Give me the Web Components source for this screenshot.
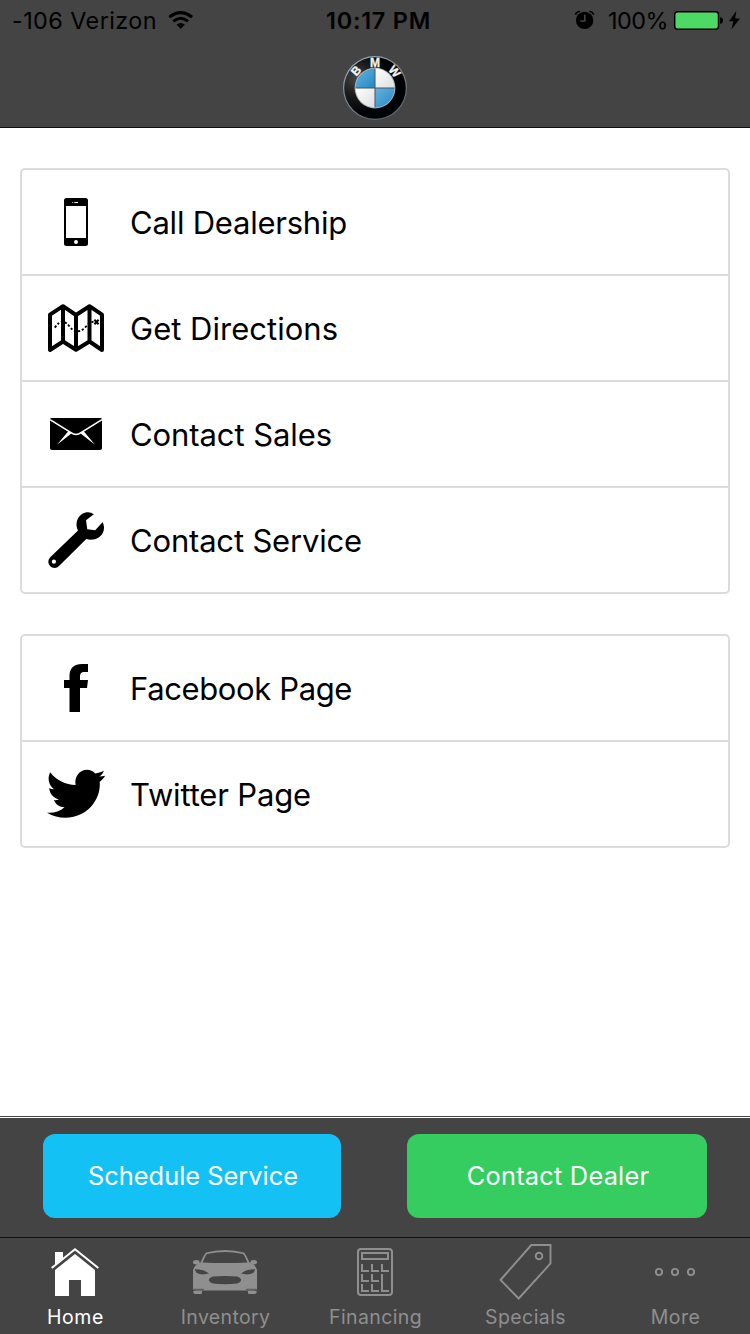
<!DOCTYPE html>
<html lang="en">
<head>
<meta charset="utf-8">
<title>Dealership</title>
<style>
html,body{margin:0;padding:0;background:#fff}
body{font-family:Inter,Roboto,"Liberation Sans",sans-serif;color:#000}
</style>
</head>
<body>
<dealer-app></dealer-app>
<script>
function define(name, html, ready) {
  const template = document.createElement('template');
  template.innerHTML = html;
  customElements.define(name, class extends HTMLElement {
    connectedCallback() {
      if (this.shadowRoot) return;
      this.attachShadow({mode: 'open'}).append(template.content.cloneNode(true));
      if (ready) ready(this, this.shadowRoot);
    }
  });
}

/* One line of text whose tracking is set so that it fills the given width. */
define('fit-label', `
<style>:host{display:inline-block;white-space:nowrap;flex:none}span{display:inline-block}</style>
<span><slot></slot></span>`, (el, root) => {
  const span = root.querySelector('span');
  const target = Number(el.getAttribute('width'));
  const gap = (target - span.getBoundingClientRect().width) / el.textContent.length;
  span.style.letterSpacing = gap.toFixed(3) + 'px';
});

define('status-bar', `
<style>
:host{display:grid;grid-template-columns:1fr auto 1fr;grid-template-rows:40px;align-items:center;height:40px;font-size:23.4px;line-height:40px}
.left,.right{display:flex;align-items:center;height:40px}
.left{padding-left:12px}
.right{justify-content:flex-end;padding-right:9px}
.time{font-weight:600;margin-left:7px}
svg{display:block;flex:none}
fit-label{margin-top:1px}
</style>
<div class="left"><fit-label width="145">-106 Verizon</fit-label>
<svg style="margin-left:11px" width="26" height="40" viewBox="168 0 26 40"><g fill="none" stroke="#000" stroke-width="3"><path d="M169.3 17.2Q180.7 8 192.1 17.2"/><path d="M173.3 21.4Q180.7 15.2 188.1 21.4"/></g><path d="M176.6 24.8Q180.7 21.2 184.8 24.8L180.7 29Z"/></svg></div>
<div class="time"><fit-label width="105">10:17 PM</fit-label></div>
<div class="right">
<svg width="22" height="40" viewBox="574 0 22 40"><circle cx="584.6" cy="20.4" r="8.7"/><path d="M575.4 14.6Q576.6 11.8 579.8 11.3M593.8 14.6Q592.6 11.8 589.4 11.3" fill="none" stroke="#000" stroke-width="1.5"/><path d="M584.8 14.8V21H580.2" fill="none" stroke="#444" stroke-width="1.6"/></svg>
<fit-label width="60" style="margin-left:12px">100%</fit-label>
<svg style="margin-left:5px" width="68" height="40" viewBox="673 0 68 40"><rect x="674.7" y="11.7" width="43.8" height="17.6" rx="3" fill="#4cd964" stroke="#000" stroke-width="1.5"/><path d="M720 17.3Q723 17.6 723 20.5T720 23.8Z"/><path d="M736.3 11L729 21.3H733.4L731.4 29.5L740 18.4H735.2Z"/></svg>
</div>`);

define('brand-logo', `
<style>:host{display:block;width:66px;height:66px}svg{display:block}text{font:bold 12px "Liberation Sans",Arial,sans-serif;fill:#f4f4f4;stroke:#f4f4f4;stroke-width:.3px;text-anchor:middle}</style>
<svg width="66" height="66" viewBox="-33 -33 66 66">
<defs>
<linearGradient id="rim" x1="0" y1="0" x2=".6" y2="1"><stop offset="0" stop-color="#a9bac6"/><stop offset=".5" stop-color="#7d8a94"/><stop offset="1" stop-color="#59666d"/></linearGradient>
<radialGradient id="ring" cx=".2" cy=".35" r=".55"><stop offset="0" stop-color="#484848"/><stop offset=".5" stop-color="#1b1b1b"/><stop offset="1" stop-color="#000305"/></radialGradient>
<linearGradient id="blue" x1="0" y1="0" x2="1" y2="1"><stop offset="0" stop-color="#68b2df"/><stop offset="1" stop-color="#2189c4"/></linearGradient>
<linearGradient id="white" x1="0" y1="0" x2="1" y2="1"><stop offset="0" stop-color="#fff"/><stop offset="1" stop-color="#dcdedf"/></linearGradient>
</defs>
<circle r="32" fill="url(#rim)"/><circle r="30.8" fill="url(#ring)"/>
<circle r="20.4" fill="#a9b4bb"/>
<path d="M0 0V-19.4A19.4 19.4 0 0 0-19.4 0Z" fill="url(#blue)"/><path d="M0 0V19.4A19.4 19.4 0 0 0 19.4 0Z" fill="url(#blue)"/>
<path d="M0 0V-19.4A19.4 19.4 0 0 1 19.4 0Z" fill="url(#white)"/><path d="M0 0V19.4A19.4 19.4 0 0 1-19.4 0Z" fill="url(#white)"/>
<path d="M-19.4 0H19.4M0-19.4V19.4" stroke="#46545d" stroke-width="1"/>
<text transform="rotate(-48)" y="-21.5">B</text><text y="-21.5">M</text><text transform="rotate(50)" y="-21.5">W</text>
</svg>`);

define('app-header', `
<style>:host{display:flex;flex-direction:column;height:127px;background:#444;border-bottom:1px solid #111}
brand-logo{align-self:center;margin-top:15px}</style>
<status-bar></status-bar><brand-logo></brand-logo>`);

define('link-card', `
<style>:host{display:flex;flex-direction:column;gap:2px;background:#dcdcdc;border:2px solid #dcdcdc;border-radius:5px;overflow:hidden}</style>
<slot></slot>`);

const rowIcons = {
phone: ['46 192 60 60', '<path fill-rule="evenodd" d="M66.5 198H85.5Q88 198 88 200.5V243.5Q88 246 85.5 246H66.5Q64 246 64 243.5V200.5Q64 198 66.5 198ZM66 206V238H86V206Z"/><circle cx="76" cy="242" r="2" fill="#fff"/><path d="M74.3 202.5H78" stroke="#fff"/><circle cx="72.7" cy="202.5" r=".5" fill="#fff"/>'],
map: ['46 298 60 60', '<g fill="none" stroke="#000"><path stroke-width="4" stroke-linejoin="round" d="M50 314.7L63 306.2L76 315L89.5 306.2L102 314.7V350L89.5 341.5L76 349.7L63 341.5L50 350ZM63 306V342M76 315V350M89.5 306V342"/><path stroke-width="1.9" stroke-dasharray="2.200 1.900" d="M54.8 327.6Q59 321.5 63 321.8Q66.500 322.3 69.500 326.500Q73 331.200 77 331.400Q82.500 331 86 326.500Q90 321.500 94 321.800"/><path stroke-width="2" d="M94.400 319.800L98.600 324.200M98.600 319.800L94.400 324.200"/></g>'],
mail: ['46 404 60 60', '<path d="M51 418H101L102 419V448Q102 450 100 450H52Q50 450 50 448V419Z"/><path d="M50 419.6L71 432.6Q76 436.500 81 432.600L102 419.600" fill="none" stroke="#fff" stroke-width="1.6"/><path fill="#fff" d="M68.500 431L57 444.700L72 433ZM83.500 431L95 444.700L80 433Z"/>'],
wrench: ['46 510 60 60', '<path fill-rule="evenodd" d="M93.800 514.300L86 520.200L87.300 529.300L95.200 530.300L102.500 522.300C104.300 524.800 104.400 529 103.200 532C100.700 538.200 93.500 541 86.300 539L59 566A6.100 6.100 0 1 1 50 557.500L78 530.500C74.800 524 76.800 517.500 82 514C86 511.500 90.500 511.500 93.800 514.300ZM53.900 559.600A2.100 2.100 0 1 0 53.900 563.800A2.100 2.100 0 1 0 53.900 559.600Z"/>'],
facebook: ['46 658 60 60', '<path d="M88 664H82C74 664 69.500 668 69.500 676V680H64V688H69.500V712H80V688H87L88 680H80V676.500C80 673.500 81 672 84 672H88Z"/>'],
twitter: ['46 764 60 60', '<path d="M50.200 772.300C56.500 780.500 65.500 784.600 75.600 785C74 776.500 79.800 769.800 87 769.800C90.200 769.800 92.800 771.100 95.200 773.500C98 773.200 101 772.200 103.900 770.800C103 773.400 101.500 775.200 99.300 776.500C101.200 776.500 103.200 776.200 105.200 775.700C103.700 778.200 102 780 99.700 781.700C100.300 789.700 98.300 796.800 93.500 803.500C84 817.200 63.500 822.500 47 812.700C53.500 813.300 59.700 811.500 64.500 807.300C59.500 807.300 55.500 804.500 54 800.100C55.700 800.400 57.300 800.200 58.800 799.500C53.500 798 49.500 793.500 49.300 788C50.800 788.900 52.400 789.300 54 789.200C48.500 784.700 47.200 778.300 50.200 772.300Z"/>']
};
define('link-row', `
<style>:host{display:flex;align-items:center;height:104px;background:#fff;padding-left:24px;font-size:31px;line-height:40px}
.icon{width:60px;height:60px;flex:none}.icon svg{display:block}
fit-label{margin:2px 0 0 24px}</style>
<div class="icon"></div>`, (el, root) => {
  const [box, art] = rowIcons[el.getAttribute('icon')];
  root.querySelector('.icon').innerHTML = `<svg width="60" height="60" viewBox="${box}">${art}</svg>`;
  const label = document.createElement('fit-label');
  label.setAttribute('width', el.getAttribute('width'));
  label.textContent = el.getAttribute('label');
  root.append(label);
});

define('action-button', `
<style>:host{display:flex;align-items:center;justify-content:center;height:84px;box-sizing:border-box;padding-bottom:1px;border-radius:12px;color:#fff;font-size:25.400px;line-height:32px}</style>
<slot></slot>`);

define('action-bar', `
<style>
:host{display:block;border-top:1px solid #444;flex:none}
.bar{display:grid;grid-template-columns:298px 300px;justify-content:space-between;align-items:start;height:119px;box-sizing:border-box;padding:16px 43px 0;background:#444;margin-top:1px}
.blue{background:#13c1f5}.green{background:#35cd60}
fit-label{margin-left:2px}
</style>
<div class="bar"><action-button class="blue"><fit-label width="210">Schedule Service</fit-label></action-button>
<action-button class="green"><fit-label width="182.5">Contact Dealer</fit-label></action-button></div>`);

const tabIcons = {
home: ['27 1240 96 60', '<path fill="currentColor" d="M75 1254L95 1270V1296H81V1280H69V1296H55V1270Z"/><path d="M51.700 1269L75 1250.300L98.300 1269" fill="none" stroke="#444" stroke-width="3.500"/><path fill="currentColor" d="M55 1252H63V1258.700L55 1265Z"/><path d="M51.700 1268L75 1249.300L98.300 1268" fill="none" stroke="currentColor" stroke-width="2"/>'],
car: ['177 1240 96 60', '<g fill="currentColor"><path d="M200.500 1262.500C202.300 1259 203.500 1255 206 1252.500Q225 1247.500 244 1252.500C246.500 1255 247.700 1259 249.500 1262.500Q255.500 1264.500 257 1270V1288Q257 1290.500 254 1290.500H196Q193 1290.500 193 1288V1270Q194.500 1264.500 200.500 1262.500Z"/><ellipse cx="196.300" cy="1262.200" rx="3.300" ry="2.200"/><ellipse cx="253.700" cy="1262.200" rx="3.300" ry="2.200"/><path d="M193.300 1291H202V1293Q202 1294 201 1294H195.500Q193.300 1294 193.300 1292ZM256.700 1291H248V1293Q248 1294 249 1294H254.500Q256.700 1294 256.700 1292Z"/></g><g fill="#444"><path d="M202.500 1262.500C204 1259.500 205 1256 207 1254Q225 1249.800 243 1254C245 1256 246 1259.500 247.500 1262.500Q225 1263.700 202.500 1262.500Z"/><path d="M194.700 1269.300Q204 1269 209 1273.600Q201 1275.500 196.500 1272.800ZM255.300 1269.300Q246 1269 241 1273.600Q249 1275.500 253.500 1272.800Z"/><path d="M213 1276.600Q225 1275.300 237 1276.600Q241 1277.700 241 1280Q241 1282.200 237 1283.500Q225 1285 213 1283.500Q209 1282.200 209 1280Q209 1277.700 213 1276.600Z"/></g><path d="M194 1289.300H204M256 1289.300H246" stroke="#444" stroke-width=".8"/>'],
calculator: ['327 1240 96 60', '<g fill="none" stroke="currentColor" stroke-width="2"><rect x="358" y="1249" width="34" height="46" rx="3"/><path d="M362 1253H388V1259H362ZM362 1264V1271H369M372 1264V1271H379M382 1264V1271H389M362 1274V1281H369M372 1274V1281H379M362 1284V1291H369M372 1284V1291H379M382 1274V1291H389"/></g>'],
tag: ['477 1240 96 60', '<g fill="none" stroke="currentColor" stroke-width="1.900"><path d="M500.500 1280L531.300 1245H550.500V1263.500L518.700 1298.500Z"/><circle cx="539" cy="1256" r="3.300" stroke-width="1.900"/></g>'],
more: ['627 1240 96 60', '<g fill="none" stroke="currentColor" stroke-width="1.900"><circle cx="659" cy="1272" r="3.100"/><circle cx="675" cy="1272" r="3.100"/><circle cx="691" cy="1272" r="3.100"/></g>']
};
define('tab-item', `
<style>:host{display:flex;flex-direction:column;align-items:center;padding-top:2px;color:#8f8f8f;font-size:19.500px;line-height:24px}
:host([active]){color:#fff}
.icon{width:96px;height:60px}.icon svg{display:block}fit-label{margin:5px 0 0 1px}</style>
<div class="icon"></div>`, (el, root) => {
  const [box, art] = tabIcons[el.getAttribute('icon')];
  root.querySelector('.icon').innerHTML = `<svg width="96" height="60" viewBox="${box}">${art}</svg>`;
  const label = document.createElement('fit-label');
  label.setAttribute('width', el.getAttribute('width'));
  label.textContent = el.getAttribute('label');
  root.append(label);
});

define('tab-bar', `
<style>:host{display:grid;grid-template-columns:repeat(5,1fr);height:96px;background:#444;border-top:1px solid #111;flex:none}</style>
<slot></slot>`);

define('dealer-app', `
<style>
:host{display:flex;flex-direction:column;width:750px;height:1334px;overflow:hidden;background:#fff}
app-header{flex:none}
main{flex:1;display:flex;flex-direction:column;gap:40px;padding:40px 20px 0}
</style>
<app-header></app-header>
<main>
<link-card>
<link-row icon="phone" label="Call Dealership" width="217"></link-row>
<link-row icon="map" label="Get Directions" width="208"></link-row>
<link-row icon="mail" label="Contact Sales" width="202"></link-row>
<link-row icon="wrench" label="Contact Service" width="232"></link-row>
</link-card>
<link-card>
<link-row icon="facebook" label="Facebook Page" width="222"></link-row>
<link-row icon="twitter" label="Twitter Page" width="181"></link-row>
</link-card>
</main>
<action-bar></action-bar>
<tab-bar>
<tab-item active icon="home" label="Home" width="57"></tab-item>
<tab-item icon="car" label="Inventory" width="89.5"></tab-item>
<tab-item icon="calculator" label="Financing" width="93"></tab-item>
<tab-item icon="tag" label="Specials" width="81"></tab-item>
<tab-item icon="more" label="More" width="49.5"></tab-item>
</tab-bar>`);
</script>
</body>
</html>
